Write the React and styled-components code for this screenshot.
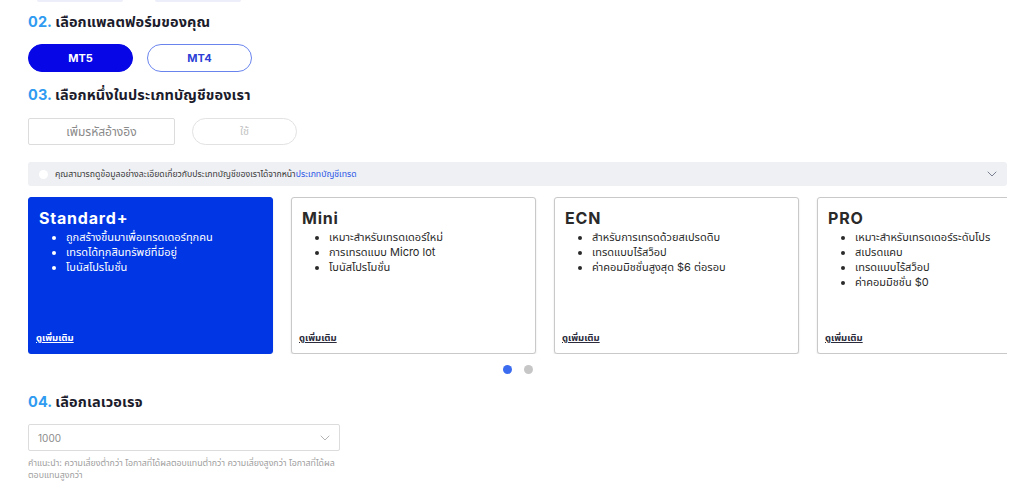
import React from 'react';
import styled, { createGlobalStyle } from 'styled-components';

const Global = createGlobalStyle`
body {
  margin: 0;
  background: #fff;
  font-family: Inter, "Noto Sans", "Noto Sans Thai", sans-serif;
  color: #1b1b2b;
}
`

const Page = styled.div`
width: 1024px;
height: 492px;
overflow: hidden;
padding: 0 17px 0 28px;
box-sizing: border-box;
`

const Remnant = styled.div`
display: flex;
gap: 32px;
padding-left: 9px;
height: 2px;
`
const RemnantBar = styled.div`
width: 86px;
height: 2px;
background: #eceef9;
border-radius: 0 0 4px 4px;
`

const Heading = styled.h2`
margin: ${p => p.$top || 10}px 0 0;
font-size: 14.5px;
line-height: 20px;
font-weight: 700;
color: #1c1c2c;
letter-spacing: 0.1px;
`
const Num = styled.span`
color: #2f9bf1;
`

const Row = styled.div`
display: flex;
gap: ${p => p.$gap}px;
margin-top: ${p => p.$top}px;
`

const Pill = styled.button`
width: 105px;
height: 28px;
border-radius: 14px;
font-family: inherit;
font-size: 11px;
font-weight: 700;
cursor: pointer;
border: 1.5px solid ${p => p.$active ? '#0606e6' : '#6a84ee'};
background: ${p => p.$active ? '#0606e6' : '#fff'};
color: ${p => p.$active ? '#fff' : '#2d3fd6'};
box-sizing: border-box;
`

const RefInput = styled.div`
width: 147px;
height: 27px;
border: 1px solid #dcdcdc;
border-radius: 2px;
box-sizing: border-box;
display: flex;
align-items: center;
justify-content: center;
font-size: 12px;
color: #8a8a8a;
`
const UseButton = styled.div`
width: 105px;
height: 27px;
border: 1.5px solid #e2e2e2;
border-radius: 14px;
box-sizing: border-box;
display: flex;
align-items: center;
justify-content: center;
font-size: 11px;
color: #c4c4c4;
`

const InfoBar = styled.div`
margin-top: 17px;
height: 24px;
background: #eef0f4;
border-radius: 3px;
display: flex;
align-items: center;
padding: 0 10px 0 11px;
font-size: 8.7px;
color: #3a3a3a;
white-space: nowrap;
`
const InfoDot = styled.span`
width: 9px;
height: 9px;
border-radius: 50%;
background: #fff;
margin-right: 7px;
flex: none;
`
const InfoLink = styled.span`
color: #2b55e6;
`
const InfoChevron = styled.span`
margin-left: auto;
display: flex;
`

const Track = styled.div`
margin-top: 11px;
overflow: hidden;
`
const Slides = styled.div`
display: flex;
gap: 18px;
width: 1100px;
`
const Card = styled.div`
flex: none;
width: 245px;
height: 157px;
box-sizing: border-box;
border-radius: 3px;
border: 1px solid ${p => p.$active ? '#0036e3' : '#c9c9c9'};
background: ${p => p.$active ? '#0036e3' : '#fff'};
color: ${p => p.$active ? '#fff' : '#2a2a2a'};
box-shadow: 0 1px 2px rgba(0,0,0,0.12);
padding: 10px 10px 8px 7px;
display: flex;
flex-direction: column;
`
const CardTitle = styled.div`
font-size: 16px;
font-weight: 700;
line-height: 20px;
letter-spacing: 0.8px;
padding-left: 3px;
`
const Bullets = styled.ul`
margin: 2px 0 0;
padding-left: 30px;
font-size: 11px;
line-height: 15px;
white-space: nowrap;
`
const More = styled.a`
margin-top: auto;
font-size: 9.5px;
font-weight: 700;
text-decoration: underline;
color: ${p => p.$active ? '#fff' : '#2b2b3b'};
`

const Dots = styled.div`
display: flex;
justify-content: center;
gap: 12px;
margin-top: 11px;
`
const Dot = styled.span`
width: 9px;
height: 9px;
border-radius: 50%;
background: ${p => p.$on ? '#3b6cf0' : '#c6c6c6'};
`

const Select = styled.div`
margin-top: 12px;
width: 312px;
height: 27px;
border: 1px solid #dcdcdc;
border-radius: 2px;
box-sizing: border-box;
display: flex;
align-items: center;
justify-content: space-between;
padding: 0 9px 0 9px;
font-size: 10px;
color: #8c8c8c;
`
const Hint = styled.p`
margin: 6px 0 0;
width: 318px;
font-size: 8.8px;
line-height: 12px;
color: #a0a0a0;
`

const cards = [
  { title: 'Standard+', active: true, items: ['ถูกสร้างขึ้นมาเพื่อเทรดเดอร์ทุกคน', 'เทรดได้ทุกสินทรัพย์ที่มีอยู่', 'โบนัสโปรโมชั่น'] },
  { title: 'Mini', items: ['เหมาะสำหรับเทรดเดอร์ใหม่', 'การเทรดแบบ Micro lot', 'โบนัสโปรโมชั่น'] },
  { title: 'ECN', items: ['สำหรับการเทรดด้วยสเปรดดิบ', 'เทรดแบบไร้สว็อป', 'ค่าคอมมิชชั่นสูงสุด $6 ต่อรอบ'] },
  { title: 'PRO', items: ['เหมาะสำหรับเทรดเดอร์ระดับโปร', 'สเปรดแคบ', 'เทรดแบบไร้สว็อป', 'ค่าคอมมิชชั่น $0'] },
]

function Chevron({ color, size }) {
  return (
    <svg width={size} height={size * 0.6} viewBox="0 0 10 6" fill="none">
      <path d="M1 1l4 4 4-4" stroke={color} strokeWidth="1" strokeLinecap="round" strokeLinejoin="round" />
    </svg>
  )
}

export default function App() {
  return (
    <Page>
      <Global />
      <Remnant>
        <RemnantBar />
        <RemnantBar />
      </Remnant>

      <Heading $top={10}><Num>02.</Num> เลือกแพลตฟอร์มของคุณ</Heading>
      <Row $gap={14} $top={12}>
        <Pill $active>MT5</Pill>
        <Pill>MT4</Pill>
      </Row>

      <Heading $top={13}><Num>03.</Num> เลือกหนึ่งในประเภทบัญชีของเรา</Heading>
      <Row $gap={17} $top={13}>
        <RefInput>เพิ่มรหัสอ้างอิง</RefInput>
        <UseButton>ใช้</UseButton>
      </Row>

      <InfoBar>
        <InfoDot />
        คุณสามารถดูข้อมูลอย่างละเอียดเกี่ยวกับประเภทบัญชีของเราได้จากหน้า<InfoLink>ประเภทบัญชีเทรด</InfoLink>
        <InfoChevron><Chevron color="#7a8090" size={10} /></InfoChevron>
      </InfoBar>

      <Track>
        <Slides>
          {cards.map(c => (
            <Card key={c.title} $active={c.active}>
              <CardTitle>{c.title}</CardTitle>
              <Bullets>
                {c.items.map(i => <li key={i}>{i}</li>)}
              </Bullets>
              <More $active={c.active}>ดูเพิ่มเติม</More>
            </Card>
          ))}
        </Slides>
      </Track>

      <Dots>
        <Dot $on />
        <Dot />
      </Dots>

      <Heading $top={18}><Num>04.</Num> เลือกเลเวอเรจ</Heading>
      <Select>
        1000
        <Chevron color="#b5b5b5" size={10} />
      </Select>
      <Hint>คำแนะนำ: ความเสี่ยงต่ำกว่า โอกาสที่ได้ผลตอบแทนต่ำกว่า ความเสี่ยงสูงกว่า โอกาสที่ได้ผลตอบแทนสูงกว่า</Hint>
    </Page>
  )
}
